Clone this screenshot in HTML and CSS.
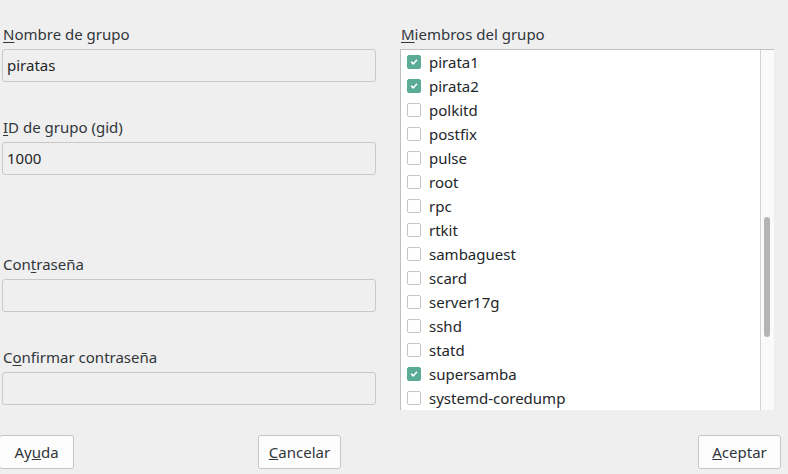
FILE: index.html
```html
<!DOCTYPE html>
<html lang="es">
<head>
<meta charset="utf-8">
<title>Grupo</title>
<link rel="stylesheet" href="styles.css">
</head>
<body>
<div class="dialog">
  <div class="main">
    <div class="left">
      <div class="group g1">
        <label class="lbl"><u>N</u>ombre de grupo</label>
        <div class="field">piratas</div>
      </div>
      <div class="group g2">
        <label class="lbl"><u>I</u>D de grupo (gid)</label>
        <div class="field">1000</div>
      </div>
      <div class="group g3">
        <label class="lbl">Con<u>t</u>raseña</label>
        <div class="field"></div>
      </div>
      <div class="group g4">
        <label class="lbl">C<u>o</u>nfirmar contraseña</label>
        <div class="field"></div>
      </div>
    </div>
    <div class="right">
      <label class="lbl"><u>M</u>iembros del grupo</label>
      <div class="list">
        <ul class="items">
          <li class="item"><span class="cb on"><svg viewBox="0 0 14 14"><path d="M4 7.2 L6.1 9.2 L10 5" /></svg></span>pirata1</li>
          <li class="item"><span class="cb on"><svg viewBox="0 0 14 14"><path d="M4 7.2 L6.1 9.2 L10 5" /></svg></span>pirata2</li>
          <li class="item"><span class="cb"></span>polkitd</li>
          <li class="item"><span class="cb"></span>postfix</li>
          <li class="item"><span class="cb"></span>pulse</li>
          <li class="item"><span class="cb"></span>root</li>
          <li class="item"><span class="cb"></span>rpc</li>
          <li class="item"><span class="cb"></span>rtkit</li>
          <li class="item"><span class="cb"></span>sambaguest</li>
          <li class="item"><span class="cb"></span>scard</li>
          <li class="item"><span class="cb"></span>server17g</li>
          <li class="item"><span class="cb"></span>sshd</li>
          <li class="item"><span class="cb"></span>statd</li>
          <li class="item"><span class="cb on"><svg viewBox="0 0 14 14"><path d="M4 7.2 L6.1 9.2 L10 5" /></svg></span>supersamba</li>
          <li class="item"><span class="cb"></span>systemd-coredump</li>
        </ul>
        <div class="scrollbar"><div class="thumb"></div></div>
      </div>
    </div>
  </div>
  <div class="buttons">
    <button class="btn btn-help">Ay<u>u</u>da</button>
    <button class="btn btn-cancel"><u>C</u>ancelar</button>
    <button class="btn btn-ok"><u>A</u>ceptar</button>
  </div>
</div>
</body>
</html>
```

FILE: styles.css
```css
* { box-sizing: border-box; }
html, body {
  margin: 0;
  padding: 0;
  background: #efefef;
}
body {
  font-family: "Noto Sans", "Open Sans", sans-serif;
  font-size: 15px;
  color: #31363b;
}
.dialog {
  width: 788px;
  height: 474px;
  overflow: hidden;
  display: flex;
  flex-direction: column;
}
.main {
  display: grid;
  grid-template-columns: 374px 374px;
  column-gap: 24px;
  padding-left: 2px;
  padding-top: 24px;
  height: 406px;
}
.lbl {
  display: block;
  line-height: 20px;
  height: 20px;
  padding-left: 1px;
  margin-bottom: 5px;
}
.lbl u { text-decoration-thickness: 1px; text-underline-offset: 2px; }
.left {
  display: flex;
  flex-direction: column;
}
.g2 { margin-top: 35px; }
.g3 { margin-top: 79px; }
.g4 { margin-top: 35px; }
.field {
  width: 374px;
  height: 33px;
  border: 1px solid #c9c9c9;
  border-radius: 3px;
  background: #efefef;
  padding-left: 4px;
  line-height: 31px;
  color: #232629;
}
.right {
  display: flex;
  flex-direction: column;
}
.list {
  flex: 1;
  display: flex;
  background: #ffffff;
  border-top: 1px solid #bfbfbf;
  border-left: 1px solid #bfbfbf;
  overflow: hidden;
}
.items {
  list-style: none;
  margin: 0;
  padding: 0;
  flex: 1;
  border-right: 1px solid #d4d4d4;
}
.item {
  height: 24px;
  display: flex;
  align-items: center;
  padding-left: 6px;
  gap: 8px;
  color: #232629;
}
.cb {
  width: 14px;
  height: 14px;
  border: 1px solid #c5c5c5;
  border-radius: 2px;
  background: #ffffff;
  display: flex;
  flex: none;
}
.cb.on {
  background: #5aac96;
  border-color: #5aac96;
}
.cb svg {
  width: 12px;
  height: 12px;
  fill: none;
  stroke: #ffffff;
  stroke-width: 1.8;
  stroke-linecap: round;
  stroke-linejoin: round;
}
.scrollbar {
  width: 13px;
  background: #fafafa;
  position: relative;
}
.thumb {
  position: absolute;
  left: 3px;
  top: 167px;
  width: 6px;
  height: 120px;
  border-radius: 3px;
  background: #b4b4b4;
}
.buttons {
  display: flex;
  align-items: flex-start;
  padding-top: 29px;
  padding-right: 7px;
}
.btn {
  font-family: inherit;
  font-size: 15px;
  color: #31363b;
  background: #fdfdfd;
  border: 1px solid #c6c6c6;
  border-radius: 3px;
  height: 34px;
  padding: 0;
  line-height: 30px;
}
.btn-help { width: 75px; margin-left: -1px; }
.btn-cancel { width: 83px; margin-left: 184px; }
.btn-ok { width: 83px; margin-left: auto; }
```
